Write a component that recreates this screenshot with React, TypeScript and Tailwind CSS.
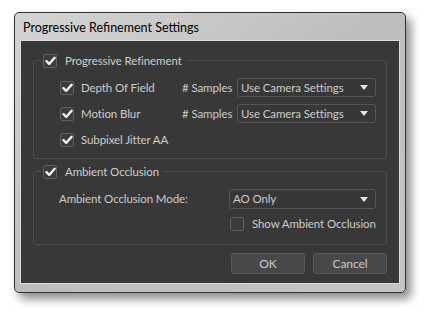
import React from 'react';

const font = { fontFamily: 'Lato, "Open Sans", sans-serif' };

function Check({ checked = true }: { checked?: boolean }) {
  return (
    <span className="flex h-[14px] w-[14px] shrink-0 items-center justify-center rounded-[2px] border border-[#5e5e5e] bg-[#3c3c3c]">
      {checked && (
        <svg width="11" height="10" viewBox="0 0 11 10">
          <path d="M1.5 5.2 L4.2 8 L9.6 1.8" fill="none" stroke="#f2f2f2" strokeWidth="2.4" strokeLinecap="round" strokeLinejoin="round" />
        </svg>
      )}
    </span>
  );
}

function Select({ value, className }: { value: string; className: string }) {
  return (
    <div className={`flex h-[19px] items-center justify-between rounded-[3px] border border-[#555] bg-[#373737] pl-[3px] pr-[7px] ${className}`}>
      <span className="whitespace-nowrap">{value}</span>
      <svg width="8" height="5" viewBox="0 0 8 5">
        <path d="M0 0 H8 L4 5 Z" fill="#e6e6e6" />
      </svg>
    </div>
  );
}

export default function App() {
  return (
    <div className="h-[312px] w-[424px] bg-white pl-[14px] pt-[12px]" style={font}>
      <div className="flex h-[281px] w-[392px] flex-col rounded-[5px] border border-[#303030] bg-gradient-to-br from-[#d4d4d4] via-[#bdbdbd] to-[#c4c4c4] px-[5px] pb-[8px] shadow-[5px_6px_10px_rgba(0,0,0,0.45)]">
        <div className="flex h-[27px] shrink-0 items-center pl-[3px] pt-[3px] text-[12.5px] text-black">
          Progressive Refinement Settings
        </div>
        <div className="flex flex-1 flex-col whitespace-nowrap border border-[#dcdcdc] bg-[#383838] px-[12px] pt-[19px] text-[11.5px] tracking-[-0.1px] text-[#cccccc]">
          {/* Progressive Refinement group */}
          <div className="h-[99px] rounded-[3px] border border-[#4d4d4d]">
            <div className="-mt-[8px] ml-[7px] flex w-fit items-center gap-[8px] bg-[#383838] px-[2px] pr-[4px]">
              <Check />
              <span className="leading-[16px]">Progressive Refinement</span>
            </div>
            <div className="mt-[9px] flex flex-col pl-[26px]">
              <div className="flex h-[19px] items-center">
                <Check />
                <span className="ml-[7px] w-[101px]">Depth Of Field</span>
                <span className="w-[55px]"># Samples</span>
                <Select value="Use Camera Settings" className="w-[139px]" />
              </div>
              <div className="mt-[7px] flex h-[19px] items-center">
                <Check />
                <span className="ml-[7px] w-[101px]">Motion Blur</span>
                <span className="w-[55px]"># Samples</span>
                <Select value="Use Camera Settings" className="w-[139px]" />
              </div>
              <div className="mt-[7px] flex h-[19px] items-center">
                <Check />
                <span className="ml-[7px]">Subpixel Jitter AA</span>
              </div>
            </div>
          </div>

          {/* Ambient Occlusion group */}
          <div className="mt-[12px] h-[74px] rounded-[3px] border border-[#4d4d4d]">
            <div className="-mt-[8px] ml-[7px] flex w-fit items-center gap-[8px] bg-[#383838] px-[2px] pr-[4px]">
              <Check />
              <span className="leading-[16px]">Ambient Occlusion</span>
            </div>
            <div className="mt-[9px] flex h-[20px] items-center pl-[25px]">
              <span className="w-[170px]">Ambient Occlusion Mode:</span>
              <Select value="AO Only" className="h-[20px] w-[147px]" />
            </div>
            <div className="mt-[7px] flex h-[15px] items-center pl-[196px]">
              <Check checked={false} />
              <span className="ml-[8px]">Show Ambient Occlusion</span>
            </div>
          </div>

          <div className="mt-[8px] flex justify-end gap-[8px]">
            <button type="button" className="h-[21px] w-[74px] rounded-[3px] border border-[#5a5a5a] bg-[#484848] text-[12px] text-[#c8c8c8]">
              OK
            </button>
            <button type="button" className="h-[21px] w-[74px] rounded-[3px] border border-[#5a5a5a] bg-[#484848] text-[12px] text-[#c8c8c8]">
              Cancel
            </button>
          </div>
        </div>
      </div>
    </div>
  );
}
